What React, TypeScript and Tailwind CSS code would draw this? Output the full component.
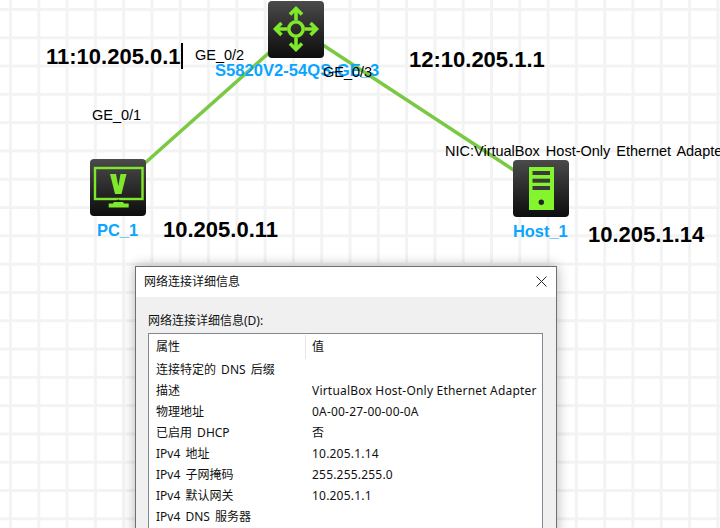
const arial = "font-['Liberation_Sans',Arial,sans-serif]";
const win = "font-['Noto_Sans','Noto_Sans_CJK_SC',sans-serif]";

const rows = [
  ["连接特定的 DNS 后缀", ""],
  ["描述", "VirtualBox Host-Only Ethernet Adapter"],
  ["物理地址", "0A-00-27-00-00-0A"],
  ["已启用 DHCP", "否"],
  ["IPv4 地址", "10.205.1.14"],
  ["IPv4 子网掩码", "255.255.255.0"],
  ["IPv4 默认网关", "10.205.1.1"],
  ["IPv4 DNS 服务器", ""],
];

function Tile({ className, children }: { className: string; children: React.ReactNode }) {
  return (
    <div className={`absolute h-[57px] w-[56px] rounded-[4px] bg-gradient-to-b from-[#4b4b4b] to-[#0e0e0e] ${className}`}>
      <svg width="56" height="57" viewBox="0 0 56 57">{children}</svg>
    </div>
  );
}

function Label({ className, children }: { className: string; children: React.ReactNode }) {
  return <span className={`absolute whitespace-nowrap leading-none ${arial} ${className}`}>{children}</span>;
}

export default function App() {
  return (
    <div className="relative h-[528px] w-[720px] overflow-hidden bg-white bg-[linear-gradient(#f3f3f3_3px,transparent_3px),linear-gradient(90deg,#f3f3f3_3px,transparent_3px)] bg-[size:28.3px_28.3px] bg-[position:9px_8px]">
      <svg className="absolute left-0 top-0" width="720" height="528">
        <line x1="297" y1="28" x2="118" y2="187" stroke="#7ac943" strokeWidth="3.5" />
        <line x1="297" y1="28" x2="541" y2="188" stroke="#7ac943" strokeWidth="3.5" />
      </svg>

      <Tile className="left-[268px] top-px">
        <g stroke="#7fe82a" fill="none" strokeWidth="3.6">
          <circle cx="28" cy="28" r="7.2" />
          <path d="M28 19V8M28 37V48M19 28H8M37 28H48" />
          <path d="M22 13.5L28 7.5L34 13.5M22 42.5L28 48.5L34 42.5M13.5 22L7.5 28L13.5 34M42.5 22L48.5 28L42.5 34" />
        </g>
      </Tile>

      <Tile className="left-[90px] top-[159px]">
        <rect x="5" y="9" width="47.5" height="31" fill="none" stroke="#7fe82a" strokeWidth="2.4" />
        <path d="M20 15H26L28.3 27L30.5 15H36.5L31.5 35H25Z" fill="#7fe82a" />
        <path d="M24 43H33L34 44.5H38.7V48.5H18.7V44.5H23Z" fill="#7fe82a" />
        <circle cx="28.3" cy="41.5" r="0.9" fill="#111" />
      </Tile>

      <Tile className="left-[513px] top-[160px]">
        <rect x="16" y="7" width="25" height="43" fill="#84f52c" />
        <rect x="19.5" y="11" width="17.5" height="4" fill="#3a3a3a" />
        <rect x="19.5" y="18.7" width="17.5" height="4" fill="#3a3a3a" />
        <rect x="19.5" y="26" width="17.5" height="4" fill="#3a3a3a" />
        <circle cx="28.3" cy="42.3" r="2.7" fill="#222" />
      </Tile>

      <Label className="left-[46px] top-[46px] text-[22px] font-bold text-black">11:10.205.0.1</Label>
      <div className="absolute left-[181px] top-[43px] h-[26px] w-[2px] bg-black" />
      <Label className="left-[409px] top-[49px] text-[22px] font-bold text-black">12:10.205.1.1</Label>
      <Label className="left-[163px] top-[219px] text-[22px] font-bold text-black">10.205.0.11</Label>
      <Label className="left-[588px] top-[224px] text-[22px] font-bold text-black">10.205.1.14</Label>

      <Label className="left-[215px] top-[63px] text-[16.6px] font-bold text-[#0aa5ff]">S5820V2-54QS-GE_3</Label>
      <Label className="left-[97px] top-[222px] text-[16.4px] font-bold text-[#0aa5ff]">PC_1</Label>
      <Label className="left-[513px] top-[223px] text-[16.4px] font-bold text-[#0aa5ff]">Host_1</Label>

      <Label className="left-[195px] top-[48px] text-[14.5px] text-black">GE_0/2</Label>
      <Label className="left-[323px] top-[65px] text-[14.5px] text-black">GE_0/3</Label>
      <Label className="left-[92px] top-[108px] text-[14.5px] text-black">GE_0/1</Label>
      <Label className="left-[445px] top-[144px] text-[14.5px] text-black [word-spacing:2px]">NIC:VirtualBox Host-Only Ethernet Adapter</Label>

      <div className={`absolute left-[135px] top-[266px] flex h-[280px] w-[422px] flex-col border border-[#707070] bg-[#f0f0f0] shadow-[0_0_12px_rgba(0,0,0,0.3)] ${win}`}>
        <div className="flex h-[30px] shrink-0 items-center justify-between bg-white pl-[8px] pr-[9px] text-[12px] text-[#111]">
          <span>网络连接详细信息</span>
          <svg width="11" height="11" viewBox="0 0 11 11" className="-mt-[1px]">
            <path d="M0.5 0.5L10.5 10.5M10.5 0.5L0.5 10.5" stroke="#222" strokeWidth="1" fill="none" />
          </svg>
        </div>
        <div className="flex flex-col pl-[12px] pr-[13px] pt-[15px] text-[12px] text-[#111]">
          <div className="h-[21px] leading-[17px]">网络连接详细信息(D):</div>
          <div className="h-[300px] border border-[#828790] bg-white">
            <div className="flex h-[25px] items-center">
              <span className="w-[157px] border-r border-[#e5e5e5] pl-[7px] leading-[24px]">属性</span>
              <span className="pl-[6px]">值</span>
            </div>
            {rows.map(([name, value]) => (
              <div key={name} className="flex h-[21px] items-center">
                <span className="w-[163px] shrink-0 whitespace-nowrap pl-[7px] [word-spacing:2px]">{name}</span>
                <span className="whitespace-nowrap tracking-[0.2px]">{value}</span>
              </div>
            ))}
          </div>
        </div>
      </div>
    </div>
  );
}
